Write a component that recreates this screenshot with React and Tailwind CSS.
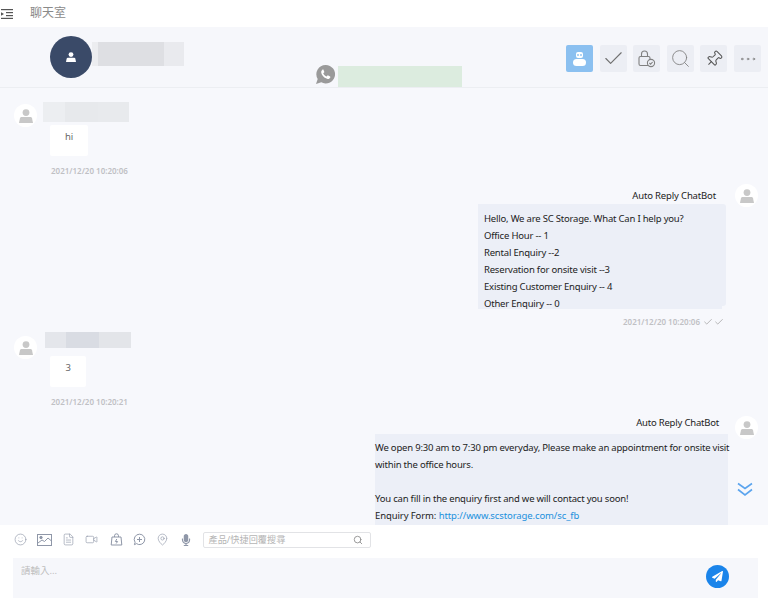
import { FaPaperPlane, FaMicrophone } from "react-icons/fa";
import { Check, Ellipsis, FileText, MapPin, Pin, Search, Smile, Video } from "lucide-react";

function PersonIcon({ className = "", size = 14 }) {
  return (
    <svg width={size} height={size} viewBox="0 0 14 14" fill="currentColor" className={className}>
      <circle cx="7" cy="3.6" r="3.4" />
      <path d="M2.6 8h8.8c.9 0 1.5.6 1.7 1.4l.9 4.6H0l.9-4.6C1.1 8.6 1.7 8 2.6 8z" />
    </svg>
  );
}

function Avatar({ className = "" }) {
  return (
    <div className={`flex h-[23px] w-[23px] shrink-0 items-center justify-center rounded-full bg-white ${className}`}>
      <PersonIcon className="text-[#c8c8c8]" />
    </div>
  );
}

function HeaderButton({ children, active }) {
  return (
    <div
      className={`flex h-[27px] w-[27px] items-center justify-center rounded-[2px] ${
        active ? "bg-[#8bc0f0]" : "bg-[#eceef4]"
      }`}
    >
      {children}
    </div>
  );
}

function Timestamp({ children }) {
  return <span className="text-[8px] font-semibold tracking-normal text-[#c0c0c4]">{children}</span>;
}

function LeftMessage({ blocks, top, bubbleClass, text, time, className }) {
  return (
    <div className={`flex pl-[14px] ${className}`}>
      <Avatar className={top ? "mt-[4px]" : "mt-[2px]"} />
      <div className="flex flex-col items-start">
        {blocks}
        <div className={`ml-[13px] flex h-[31px] justify-center rounded-[2px] bg-white pt-[5px] text-[#666] ${bubbleClass}`}>
          {text}
        </div>
        <div className="mt-[9px] ml-[14px] leading-[12px]">
          <Timestamp>{time}</Timestamp>
        </div>
      </div>
    </div>
  );
}

export default function App() {
  return (
    <div className="flex h-[609px] w-[768px] flex-col overflow-hidden bg-white text-[9.5px] tracking-[-0.2px] text-[#333] [font-family:'Noto_Sans','Noto_Sans_CJK_TC',sans-serif]">
      <div className="flex h-[27px] shrink-0 items-center pb-[2px]">
        <svg width="12" height="10" viewBox="0 0 12 10" className="mt-[3px] ml-[1px] text-[#555]" fill="currentColor">
          <rect x="0" y="0" width="12" height="1.2" />
          <rect x="5" y="3" width="7" height="1.2" />
          <rect x="5" y="6" width="7" height="1.2" />
          <rect x="0" y="8.8" width="12" height="1.2" />
          <path d="M0 3.2 L3 5 L0 6.8 Z" />
        </svg>
        <span className="ml-[17px] text-[12px] tracking-normal text-[#8a8a8a]">聊天室</span>
      </div>

      <div className="flex h-[61px] shrink-0 border-b border-[#eceef2] bg-[#f6f7fb] pl-[50px]">
        <div className="mt-[9px] flex h-[42px] w-[42px] items-center justify-center rounded-full bg-[#3a4a68]">
          <PersonIcon size={10} className="text-white" />
        </div>
        <div className="mt-[15px] flex h-[24px] w-[92px]">
          <div className="w-[6px] bg-[#ecedf0]" />
          <div className="w-[66px] bg-[#dedfe3]" />
          <div className="w-[20px] bg-[#e9eaee]" />
        </div>
        <div className="ml-[131px] flex items-end">
          <svg width="21" height="21" viewBox="0 0 21 21" className="mb-[2px]">
            <path d="M10.8 1a9.2 9.2 0 1 1-4.5 17.2L1 20l1.7-5.1A9.2 9.2 0 0 1 10.8 1z" fill="#9a9a9a" />
            <path
              d="M7.6 5.8c-.8.4-1.5 1.3-1.4 2.5.2 2.9 3.6 6.3 6.5 6.6 1.2.1 2.2-.6 2.6-1.5.2-.5.1-.8-.2-1l-1.9-1c-.3-.1-.5 0-.7.2l-.8 1c-1.5-.5-3-2-3.5-3.4l.9-.8c.2-.2.3-.4.2-.7l-.9-2c-.2-.4-.4-.5-.8-.4z"
              fill="#fff"
            />
          </svg>
          <div className="ml-[2px] h-[21px] w-[124px] bg-[#dcecdf]" />
        </div>
        <div className="mt-[18px] ml-auto flex gap-[6.6px] pr-[7px]">
          <HeaderButton active>
            <svg width="15" height="16" viewBox="0 0 15 16" fill="white">
              <rect x="4" y="1" width="7" height="6" rx="2" />
              <rect x="1" y="8" width="13" height="7" rx="3.5" />
              <circle cx="6" cy="4" r="0.9" fill="#8bc0f0" />
              <circle cx="9" cy="4" r="0.9" fill="#8bc0f0" />
            </svg>
          </HeaderButton>
          <HeaderButton>
            <Check size={23} strokeWidth={1.2} className="shrink-0 text-[#707070]" />
          </HeaderButton>
          <HeaderButton>
            <svg width="19" height="19" viewBox="0 0 19 19" fill="none" stroke="#808080" strokeWidth="1.1">
              <rect x="2" y="7.5" width="11" height="9" rx="1.5" />
              <path d="M4.5 7.5V5a3 3 0 0 1 6 0v2.5" />
              <circle cx="14" cy="14" r="3.6" fill="#eceef4" />
              <path d="M12.4 14l1.2 1.2 2-2.2" />
            </svg>
          </HeaderButton>
          <HeaderButton>
            <Search size={21} strokeWidth={1} className="shrink-0 text-[#808080]" />
          </HeaderButton>
          <HeaderButton>
            <Pin size={18} strokeWidth={1.4} className="rotate-45 text-[#555]" />
          </HeaderButton>
          <HeaderButton>
            <Ellipsis size={20} strokeWidth={1} className="shrink-0 text-[#808080]" />
          </HeaderButton>
        </div>
      </div>

      <div className="relative h-[437px] shrink-0 overflow-hidden bg-[#f7f8fc] text-[#222]">
        <LeftMessage
          className="mt-[14px]"
          blocks={
            <div className="mb-[3px] ml-[6px] flex h-[20px] w-[86px]">
              <div className="w-[22px] bg-[#eceef1]" />
              <div className="w-[33px] bg-[#e7e9ec]" />
              <div className="w-[31px] bg-[#e8eaed]" />
            </div>
          }
          bubbleClass="w-[38px]"
          text="hi"
          time="2021/12/20 10:20:06"
        />

        <div className="mt-[8px] flex justify-end pr-[10px]">
          <div className="flex flex-col items-end">
            <div className="mr-[9px] h-[19px] pt-[2px] leading-[18px] tracking-[-0.15px]">Auto Reply ChatBot</div>
            <div className="mr-[-1px] h-[102px] w-[248px] rounded-[3px] bg-[#eceff7]">
              <div className="h-[105px] w-[244px] bg-[#eceff7] pt-[6px] pl-[6px] leading-[17px]">
                <p>Hello, We are SC Storage. What Can I help you?</p>
                <p>Office Hour -- 1</p>
                <p>Rental Enquiry --2</p>
                <p>Reservation for onsite visit --3</p>
                <p>Existing Customer Enquiry -- 4</p>
                <p>Other Enquiry -- 0</p>
              </div>
            </div>
            <div className="mt-[10px] mr-[1px] flex h-[12px] items-center gap-[1px]">
              <Timestamp>2021/12/20 10:20:06</Timestamp>
              <Check size={10} className="ml-[2px] text-[#aaa]" />
              <Check size={10} className="text-[#aaa]" />
            </div>
          </div>
          <Avatar className="mt-[-1px] ml-[10px]" />
        </div>

        <LeftMessage
          className="mt-[4px]"
          top
          blocks={
            <div className="mb-[8px] ml-[8px] flex h-[16px] w-[86px]">
              <div className="w-[21px] bg-[#e4e6eb]" />
              <div className="w-[33px] bg-[#d9dce3]" />
              <div className="w-[32px] bg-[#e3e5e9]" />
            </div>
          }
          bubbleClass="w-[36px]"
          text="3"
          time="2021/12/20 10:20:21"
        />

        <div className="mt-[6px] flex justify-end pr-[10px]">
          <div className="flex flex-col items-end">
            <div className="mr-[9px] h-[20px] leading-[18px]">Auto Reply ChatBot</div>
            <div className="mr-[3px] h-[120px] w-[350px] rounded-[3px] bg-[#eceff7]">
              <div className="h-[120px] w-[353px] bg-[#eceff7] pt-[5px] leading-[17px]">
                <p className="whitespace-nowrap">We open 9:30 am to 7:30 pm everyday, Please make an appointment for onsite visit</p>
                <p>within the office hours.</p>
                <p className="h-[17px]" />
                <p>You can fill in the enquiry first and we will contact you soon!</p>
                <p className="tracking-[-0.1px]">
                  Enquiry Form: <span className="text-[#1a8fdd]">http://www.scstorage.com/sc_fb</span>
                </p>
              </div>
            </div>
          </div>
          <Avatar className="mt-[2px] ml-[7px]" />
        </div>

        <svg
          width="16"
          height="15"
          viewBox="0 0 16 15"
          fill="none"
          stroke="#5ba4ee"
          strokeWidth="1.6"
          className="absolute top-[394px] right-[15px]"
        >
          <path d="M1 1.5l7 5 7-5M1 7.5l7 5.5 7-5.5" />
        </svg>
      </div>

      <div className="flex h-[31px] shrink-0 items-center gap-[10px] pb-[2px] pl-[14px] text-[#8f97a8]">
        <Smile size={13} strokeWidth={1.2} />
        <svg width="15" height="12" viewBox="0 0 15 12" fill="none" stroke="currentColor" strokeWidth="1">
          <rect x="0.5" y="0.5" width="14" height="11" />
          <circle cx="4" cy="3.5" r="1.2" fill="currentColor" />
          <path d="M1 9l4-3 2.5 1.5L11 4l3.5 3" />
        </svg>
        <FileText size={13} strokeWidth={1.2} />
        <Video size={13} strokeWidth={1.2} />
        <svg width="13" height="13" viewBox="0 0 13 13" fill="none" stroke="currentColor" strokeWidth="1" className="ml-[1.5px]">
          <path d="M2 4h9l.8 8H1.2zM4.5 4V2.8a2 2 0 0 1 4 0V4M6.8 6 5.4 8.5h2.2L6.2 10.5" />
        </svg>
        <svg width="13" height="13" viewBox="0 0 13 13" fill="none" stroke="currentColor" strokeWidth="1">
          <path d="M6.5 1.2a5.2 5.2 0 1 1-3 9.4L1.4 11.7l.7-2.4a5.2 5.2 0 0 1 4.4-8.1zM6.5 4v5M4 6.5h5" />
        </svg>
        <MapPin size={13} strokeWidth={1.2} />
        <FaMicrophone className="ml-[1px] text-[12px]" />
        <div className="ml-[1px] flex h-[16px] w-[168px] items-center justify-between rounded-[2px] border border-[#e2e3e6] pr-[7px] pl-[5px] text-[9.2px] tracking-normal text-[#b5b5b5]">
          <span>產品/快捷回覆搜尋</span>
          <Search size={10} className="text-[#888]" />
        </div>
      </div>

      <div className="mx-[13px] mt-[2px] flex h-[40px] w-[745px] shrink-0 justify-between bg-[#f6f7fb] pt-[6px] pr-[29px] pl-[8px] text-[9.5px] tracking-normal text-[#bdbdbd]">
        <span>請輸入...</span>
        <div className="mt-[1px] flex h-[23px] w-[23px] items-center justify-center rounded-full bg-[#1a84ea]">
          <FaPaperPlane className="text-[11px] text-white" />
        </div>
      </div>
    </div>
  );
}
